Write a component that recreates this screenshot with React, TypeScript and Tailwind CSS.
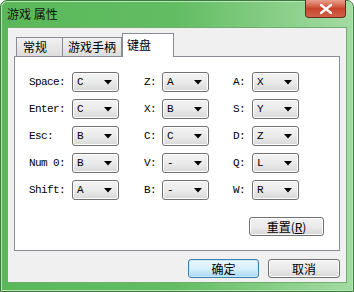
import React from "react";

const mono = { fontFamily: '"Liberation Mono", "DejaVu Sans Mono", monospace' };
const cjk = { fontFamily: '"Noto Sans CJK SC", "Noto Sans", sans-serif' };

function Combo({ v }: { v: string }) {
  return (
    <div className="w-[47px] h-[20px] rounded-[3px] border border-[#707070] bg-gradient-to-b from-[#f3f3f3] via-[#ebebeb] to-[#d8d8d8] flex items-center justify-between pl-[4px] pr-[6px] shadow-[inset_0_0_0_1px_#ffffff]">
      <span className="text-[11px] tracking-[-0.6px] leading-none text-black" style={mono}>{v}</span>
      <svg width="8" height="5" viewBox="0 0 8 5"><path d="M0 0 H8 L4 4.5 Z" fill="#000" /></svg>
    </div>
  );
}

const rows: [string, string, string, string, string, string][] = [
  ["Space:", "C", "Z:", "A", "A:", "X"],
  ["Enter:", "C", "X:", "B", "S:", "Y"],
  ["Esc:", "B", "C:", "C", "D:", "Z"],
  ["Num 0:", "B", "V:", "-", "Q:", "L"],
  ["Shift:", "A", "B:", "-", "W:", "R"],
];

function Label({ t, w }: { t: string; w: string }) {
  return (
    <span className={`${w} text-[11px] tracking-[-0.6px] leading-none text-black`} style={mono}>{t}</span>
  );
}

export default function App() {
  return (
    <div className="relative w-[354px] h-[292px] overflow-hidden">
      <div className="w-full h-full flex flex-col rounded-t-[7px] border border-[#3a7a3a] bg-gradient-to-r from-[#5ab85a] via-[#62bd62] to-[#a3dba3] shadow-[inset_0_0_0_1px_#b9e6b9]">
        {/* title bar */}
        <div className="h-[26px] flex items-start pl-[6px] pt-[6px]">
          <span className="text-[12px] leading-[14px] text-[#111]" style={cjk}>游戏 属性</span>
        </div>
        {/* client */}
        <div className="mx-[6px] mb-[8px] flex-1 border border-[#6fae6f] bg-[#f0f0f0] flex flex-col px-[6px] pt-[5px]">
          {/* tabs */}
          <div className="flex items-end h-[23px] pl-[2px] relative z-10">
            <div className="w-[47px] h-[19px] border border-[#898c95] border-b-0 bg-gradient-to-b from-[#f2f2f2] to-[#dcdcdc] flex items-center pl-[6px] text-[12px] text-black" style={cjk}>常规</div>
            <div className="w-[59px] h-[19px] border border-[#898c95] border-l-0 border-b-0 bg-gradient-to-b from-[#f2f2f2] to-[#dcdcdc] flex items-center pl-[5px] text-[12px] text-black" style={cjk}>游戏手柄</div>
            <div className="w-[52px] h-[24px] -mb-[1px] border border-[#898c95] border-b-0 bg-white flex items-start pt-[2px] pl-[4px] text-[12px] text-black" style={cjk}>键盘</div>
          </div>
          {/* panel */}
          <div className="h-[195px] border border-[#898c95] bg-white flex flex-col pl-[14px] pr-[15px] pt-[15px]">
            <div className="flex flex-col gap-[7px]">
              {rows.map((r) => (
                <div key={r[0]} className="flex items-center h-[20px]">
                  <Label t={r[0]} w="w-[43px]" />
                  <Combo v={r[1]} />
                  <span className="w-[25px]" />
                  <Label t={r[2]} w="w-[18px]" />
                  <Combo v={r[3]} />
                  <span className="w-[24px]" />
                  <Label t={r[4]} w="w-[19px]" />
                  <Combo v={r[5]} />
                </div>
              ))}
            </div>
            <div className="flex justify-end mt-[17px]">
              <div className="w-[75px] h-[19px] rounded-[3px] border border-[#707070] bg-gradient-to-b from-[#f2f2f2] via-[#ebebeb] to-[#d6d6d6] shadow-[inset_0_0_0_1px_#fcfcfc] flex items-center justify-center text-[12px] leading-none text-black" style={cjk}>
                重置(<span className="underline">R</span>)
              </div>
            </div>
          </div>
          {/* bottom buttons */}
          <div className="flex justify-end gap-[9px] mt-[8px]">
            <div className="w-[71px] h-[19px] rounded-[3px] border border-[#3c7fb1] bg-gradient-to-b from-[#eaf6fd] via-[#d9f0fc] to-[#a7d9f5] shadow-[inset_0_0_0_1px_#c7e8f8] flex items-center justify-center text-[12px] leading-none text-black" style={cjk}>确定</div>
            <div className="w-[72px] h-[19px] rounded-[3px] border border-[#707070] bg-gradient-to-b from-[#f2f2f2] via-[#ebebeb] to-[#d6d6d6] shadow-[inset_0_0_0_1px_#fcfcfc] flex items-center justify-center text-[12px] leading-none text-black" style={cjk}>取消</div>
          </div>
        </div>
      </div>
      {/* close button */}
      <div className="absolute top-0 right-[8px] w-[41px] h-[18px] rounded-b-[4px] border border-[#6b2a1f] border-t-0 bg-gradient-to-b from-[#e8a08e] via-[#c9442b] to-[#d2614a] flex items-center justify-center">
        <svg width="12" height="10" viewBox="0 0 12 10">
          <path d="M1 1 L11 9 M11 1 L1 9" stroke="#fff" strokeWidth="2.4" strokeLinecap="square" />
        </svg>
      </div>
    </div>
  );
}
